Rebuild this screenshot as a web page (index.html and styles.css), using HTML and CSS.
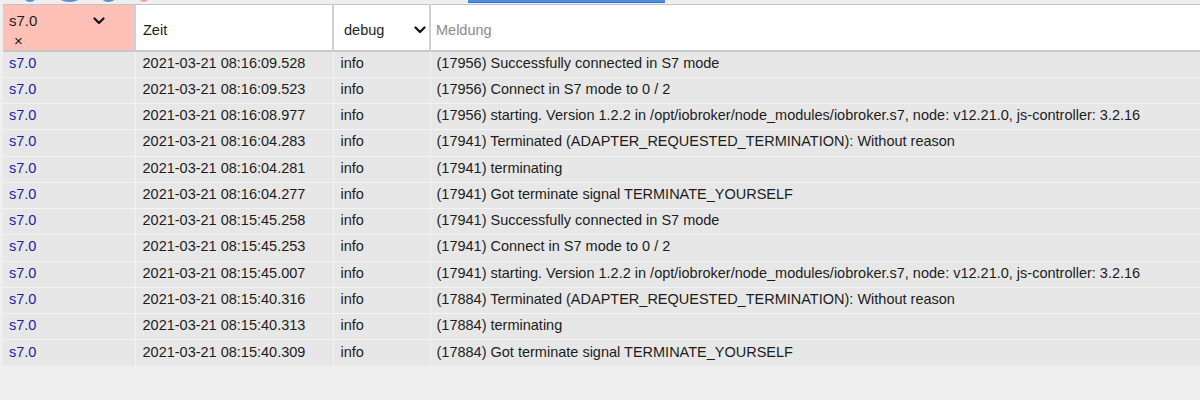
FILE: index.html
```html
<!DOCTYPE html>
<html>
<head>
<meta charset="utf-8">
<link rel="stylesheet" href="styles.css">
</head>
<body>
<div class="toolbar">
  <span class="btn b1"></span>
  <span class="btn b2"></span>
  <span class="btn b3"></span>
  <span class="btn b4"></span>
  <span class="bar"></span>
</div>
<table class="log">
  <colgroup>
    <col class="c1"><col class="c2"><col class="c3"><col class="c4">
  </colgroup>
  <thead>
    <tr>
      <th class="h-src">
        <div class="src-top"><span>s7.0</span>
          <svg class="chev" width="12" height="8" viewBox="0 0 12 8"><path d="M1.5 1.5 L6 6 L10.5 1.5" fill="none" stroke="#111" stroke-width="2.2" stroke-linecap="round" stroke-linejoin="round"/></svg>
        </div>
        <div class="src-x">×</div>
      </th>
      <th class="h-time">Zeit</th>
      <th class="h-lvl"><div class="lvl"><span>debug</span>
          <svg class="chev" width="12" height="8" viewBox="0 0 12 8"><path d="M1.5 1.5 L6 6 L10.5 1.5" fill="none" stroke="#111" stroke-width="2.2" stroke-linecap="round" stroke-linejoin="round"/></svg></div></th>
      <th class="h-msg">Meldung</th>
    </tr>
  </thead>
  <tbody>
    <tr><td class="src">s7.0</td><td>2021-03-21 08:16:09.528</td><td>info</td><td>(17956) Successfully connected in S7 mode</td></tr>
    <tr><td class="src">s7.0</td><td>2021-03-21 08:16:09.523</td><td>info</td><td>(17956) Connect in S7 mode to 0 / 2</td></tr>
    <tr><td class="src">s7.0</td><td>2021-03-21 08:16:08.977</td><td>info</td><td>(17956) starting. Version 1.2.2 in /opt/iobroker/node_modules/iobroker.s7, node: v12.21.0, js-controller: 3.2.16</td></tr>
    <tr><td class="src">s7.0</td><td>2021-03-21 08:16:04.283</td><td>info</td><td>(17941) Terminated (ADAPTER_REQUESTED_TERMINATION): Without reason</td></tr>
    <tr><td class="src">s7.0</td><td>2021-03-21 08:16:04.281</td><td>info</td><td>(17941) terminating</td></tr>
    <tr><td class="src">s7.0</td><td>2021-03-21 08:16:04.277</td><td>info</td><td>(17941) Got terminate signal TERMINATE_YOURSELF</td></tr>
    <tr><td class="src">s7.0</td><td>2021-03-21 08:15:45.258</td><td>info</td><td>(17941) Successfully connected in S7 mode</td></tr>
    <tr><td class="src">s7.0</td><td>2021-03-21 08:15:45.253</td><td>info</td><td>(17941) Connect in S7 mode to 0 / 2</td></tr>
    <tr><td class="src">s7.0</td><td>2021-03-21 08:15:45.007</td><td>info</td><td>(17941) starting. Version 1.2.2 in /opt/iobroker/node_modules/iobroker.s7, node: v12.21.0, js-controller: 3.2.16</td></tr>
    <tr><td class="src">s7.0</td><td>2021-03-21 08:15:40.316</td><td>info</td><td>(17884) Terminated (ADAPTER_REQUESTED_TERMINATION): Without reason</td></tr>
    <tr><td class="src">s7.0</td><td>2021-03-21 08:15:40.313</td><td>info</td><td>(17884) terminating</td></tr>
    <tr><td class="src">s7.0</td><td>2021-03-21 08:15:40.309</td><td>info</td><td>(17884) Got terminate signal TERMINATE_YOURSELF</td></tr>
  </tbody>
</table>
</body>
</html>
```
FILE: styles.css
```css
html, body {
  margin: 0;
  padding: 0;
  background: #efefef;
  font-family: "Liberation Sans", Arial, sans-serif;
  font-size: 14.5px;
  color: #1c1c1c;
}
.toolbar {
  height: 4px;
  overflow: hidden;
  display: flex;
  align-items: flex-end;
}
.btn {
  display: block;
  height: 14px;
  border-radius: 50%;
  margin-bottom: 2px;
  background: #5a8fd0;
  flex: none;
}
.b1 { width: 14px; margin-left: 23px; }
.b2 { width: 25px; margin-left: 20px; }
.b3 { width: 17px; margin-left: 18px; }
.b4 { width: 12px; margin-left: 21px; background: #eaa8a2; }
.bar {
  display: block;
  width: 197px;
  height: 10px;
  margin-left: 318px;
  background: #4a90e2;
  border-bottom: 1px solid #3a74c0;
  margin-bottom: 1px;
  flex: none;
}
.log {
  border-collapse: collapse;
  table-layout: fixed;
  width: 1197px;
  margin-left: 3px;
}
.c1 { width: 132px; }
.c2 { width: 198px; }
.c3 { width: 97px; }
thead tr {
  height: 45px;
  background: #fff;
  border-top: 1px solid #c4c4c4;
  border-bottom: 2px solid #c8c8c8;
}
th {
  font-weight: normal;
  text-align: left;
  padding: 4px 0 0 7px;
  border-left: 2px solid #d0d0d0;
  vertical-align: middle;
}
th.h-src {
  background: #ffc0b8;
  border-left: none;
  padding: 0 0 0 6px;
  vertical-align: top;
  font-size: 15px;
}
.src-top {
  display: flex;
  align-items: center;
  justify-content: space-between;
  padding: 5px 29px 0 0;
  height: 21px;
}
.src-x {
  padding-left: 5px;
  padding-top: 1px;
  font-size: 15px;
  line-height: 18px;
}
.lvl {
  display: flex;
  align-items: center;
  justify-content: space-between;
  padding: 0 3px 0 3px;
}
th.h-msg {
  color: #8a8a8a;
  padding-left: 5px;
}
tbody tr {
  height: 26.27px;
  background: #e7e7e7;
  border-bottom: 1px solid #f3f3f3;
}
td {
  padding: 0 0 3px 7px;
  border-left: 1px solid #f3f3f3;
  white-space: nowrap;
  overflow: hidden;
}
td:first-child {
  border-left: none;
  padding-left: 6px;
}
td:last-child { padding-left: 6px; }
td.src { color: #1c1ca8; }
```
